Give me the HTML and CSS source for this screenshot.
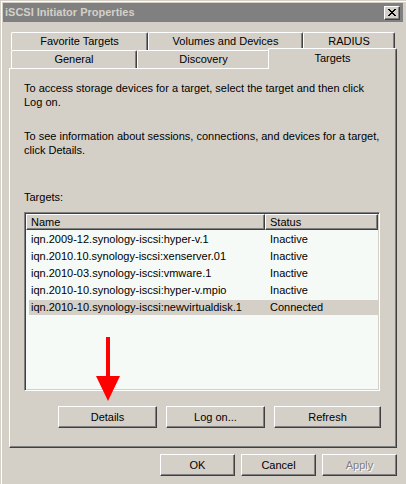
FILE: index.html
```html
<!DOCTYPE html>
<html>
<head>
<meta charset="utf-8">
<link rel="stylesheet" href="styles.css">
</head>
<body>
<div class="window">
  <div class="titlebar">
    <span class="title">iSCSI Initiator Properties</span>
    <span class="close">
      <svg width="8" height="7" viewBox="0 0 8 7" shape-rendering="crispEdges">
        <rect x="0" y="0" width="2" height="1" fill="#000"/>
        <rect x="6" y="0" width="2" height="1" fill="#000"/>
        <rect x="1" y="1" width="2" height="1" fill="#000"/>
        <rect x="5" y="1" width="2" height="1" fill="#000"/>
        <rect x="2" y="2" width="4" height="1" fill="#000"/>
        <rect x="3" y="3" width="2" height="1" fill="#000"/>
        <rect x="2" y="4" width="4" height="1" fill="#000"/>
        <rect x="1" y="5" width="2" height="1" fill="#000"/>
        <rect x="5" y="5" width="2" height="1" fill="#000"/>
        <rect x="0" y="6" width="2" height="1" fill="#000"/>
        <rect x="6" y="6" width="2" height="1" fill="#000"/>
      </svg>
    </span>
  </div>
  <div class="dialog">
    <div class="tabs">
      <div class="tabrow">
        <div class="tab w-fav">Favorite Targets</div>
        <div class="tab w-vol">Volumes and Devices</div>
        <div class="tab w-rad">RADIUS</div>
      </div>
      <div class="tabrow">
        <div class="tab w-gen">General</div>
        <div class="tab w-disc">Discovery</div>
        <div class="tab w-tgt selected">Targets</div>
      </div>
    </div>
    <div class="panel">
      <p class="desc">To access storage devices for a target, select the target and then click<br>Log on.</p>
      <p class="desc second">To see information about sessions, connections, and devices for a target,<br>click Details.</p>
      <div class="label">Targets:</div>
      <div class="listbox">
        <div class="lv-header">
          <div class="hcell hname">Name</div>
          <div class="hcell hstatus">Status</div>
        </div>
        <div class="lv-row"><span class="cname">iqn.2009-12.synology-iscsi:hyper-v.1</span><span class="cstatus">Inactive</span></div>
        <div class="lv-row"><span class="cname">iqn.2010.10.synology-iscsi:xenserver.01</span><span class="cstatus">Inactive</span></div>
        <div class="lv-row"><span class="cname">iqn.2010-03.synology-iscsi:vmware.1</span><span class="cstatus">Inactive</span></div>
        <div class="lv-row"><span class="cname">iqn.2010-10.synology-iscsi:hyper-v.mpio</span><span class="cstatus">Inactive</span></div>
        <div class="lv-row selected"><span class="cname">iqn.2010-10.synology-iscsi:newvirtualdisk.1</span><span class="cstatus">Connected</span></div>
      </div>
      <div class="btnrow">
        <div class="btn w99">Details</div>
        <div class="btn w99">Log on...</div>
        <div class="btn w107">Refresh</div>
      </div>
      <svg class="arrow" width="26" height="66" viewBox="0 0 26 66">
        <rect x="11" y="1" width="4" height="40" fill="#ff0000"/>
        <polygon points="1,40 25,40 13,65" fill="#ff0000"/>
      </svg>
    </div>
    <div class="dlgbtns">
      <div class="btn w75">OK</div>
      <div class="btn w75">Cancel</div>
      <div class="btn w75 disabled">Apply</div>
    </div>
  </div>
</div>
</body>
</html>
```
FILE: styles.css
```css
* { box-sizing: border-box; }
html, body { margin: 0; padding: 0; background: #d4d0c8; }
body {
  font-family: "Liberation Sans", Arial, sans-serif;
  font-size: 11px;
  color: #000;
}
.window {
  width: 406px;
  height: 484px;
  padding: 3px;
  background: #d4d0c8;
  box-shadow: inset 1px 1px 0 #d4d0c8, inset 2px 2px 0 #ffffff;
  overflow: hidden;
}
.titlebar {
  height: 19px;
  background: #808080;
  display: flex;
  align-items: center;
  justify-content: space-between;
  padding: 0 3px 0 2px;
}
.title {
  color: #d4d0c8;
  font-weight: bold;
  font-size: 11px;
  line-height: 19px;
}
.close {
  width: 16px;
  height: 14px;
  background: #d4d0c8;
  border: 1px solid;
  border-color: #ffffff #404040 #404040 #ffffff;
  box-shadow: inset -1px -1px 0 #808080;
  display: flex;
  align-items: center;
  justify-content: center;
  padding-right: 1px;
}
.close svg { display: block; }
.dialog {
  padding: 10px 0 0 6px;
}
.tabs {
  margin-left: 2px;
  height: 36px;
}
.tabrow {
  display: flex;
  height: 18px;
}
.tab {
  height: 18px;
  background: #d4d0c8;
  border-top: 1px solid #ffffff;
  border-left: 1px solid #ffffff;
  border-right: 1px solid #404040;
  box-shadow: inset -1px 0 0 #808080;
  border-top-left-radius: 2px;
  border-top-right-radius: 2px;
  text-align: center;
  line-height: 16px;
  white-space: nowrap;
}
.w-fav { width: 137px; }
.w-vol { width: 155px; }
.w-rad { width: 92px; }
.w-gen { width: 126px; }
.w-disc { width: 133px; }
.w-tgt { width: 129px; }
.tab.selected {
  height: 21px;
  margin-top: -2px;
  margin-left: -2px;
  position: relative;
  z-index: 2;
  line-height: 18px;
}
.panel {
  width: 388px;
  height: 380px;
  border-top: 1px solid #ffffff;
  border-left: 1px solid #ffffff;
  border-right: 1px solid #404040;
  border-bottom: 1px solid #404040;
  box-shadow: inset -1px -1px 0 #808080;
  padding: 12px 14px 0 14px;
  position: relative;
}
.desc {
  margin: 0;
  line-height: 14px;
  white-space: nowrap;
}
.desc.second { margin-top: 20px; }
.label {
  margin-top: 33px;
  line-height: 14px;
}
.listbox {
  margin-top: 8px;
  width: 356px;
  height: 179px;
  padding: 1px;
  border: 1px solid;
  border-color: #808080 #ffffff #ffffff #808080;
  box-shadow: inset 1px 1px 0 #404040, inset -1px -1px 0 #d4d0c8;
  background: #f5faf6;
}
.lv-header {
  display: flex;
  height: 16px;
}
.hcell {
  height: 16px;
  background: #d4d0c8;
  border: 1px solid;
  border-color: #ffffff #404040 #404040 #ffffff;
  box-shadow: inset -1px -1px 0 #808080;
  line-height: 14px;
  padding-left: 4px;
}
.hname { width: 239px; }
.hstatus { width: 113px; }
.lv-row {
  display: flex;
  height: 15px;
  margin-top: 2px;
  margin-left: 3px;
  line-height: 15px;
  white-space: nowrap;
}
.lv-row.selected { background: #d4d0c8; }
.cname { width: 239px; padding-left: 2px; }
.cstatus { padding-left: 2px; }
.btnrow {
  display: flex;
  justify-content: flex-end;
  gap: 9px;
  margin-top: 15px;
  margin-right: 1px;
}
.btn {
  height: 22px;
  background: #d4d0c8;
  border: 1px solid;
  border-color: #ffffff #404040 #404040 #ffffff;
  box-shadow: inset -1px -1px 0 #808080;
  text-align: center;
  line-height: 20px;
}
.w99 { width: 99px; }
.w107 { width: 107px; }
.w75 { width: 75px; }
.btn.disabled {
  color: #808080;
  text-shadow: 1px 1px 0 #ffffff;
}
.dlgbtns {
  display: flex;
  justify-content: flex-end;
  gap: 6px;
  margin-top: 6px;
  margin-right: 6px;
}
.arrow {
  position: absolute;
  left: 85px;
  top: 267px;
  display: block;
}
```
